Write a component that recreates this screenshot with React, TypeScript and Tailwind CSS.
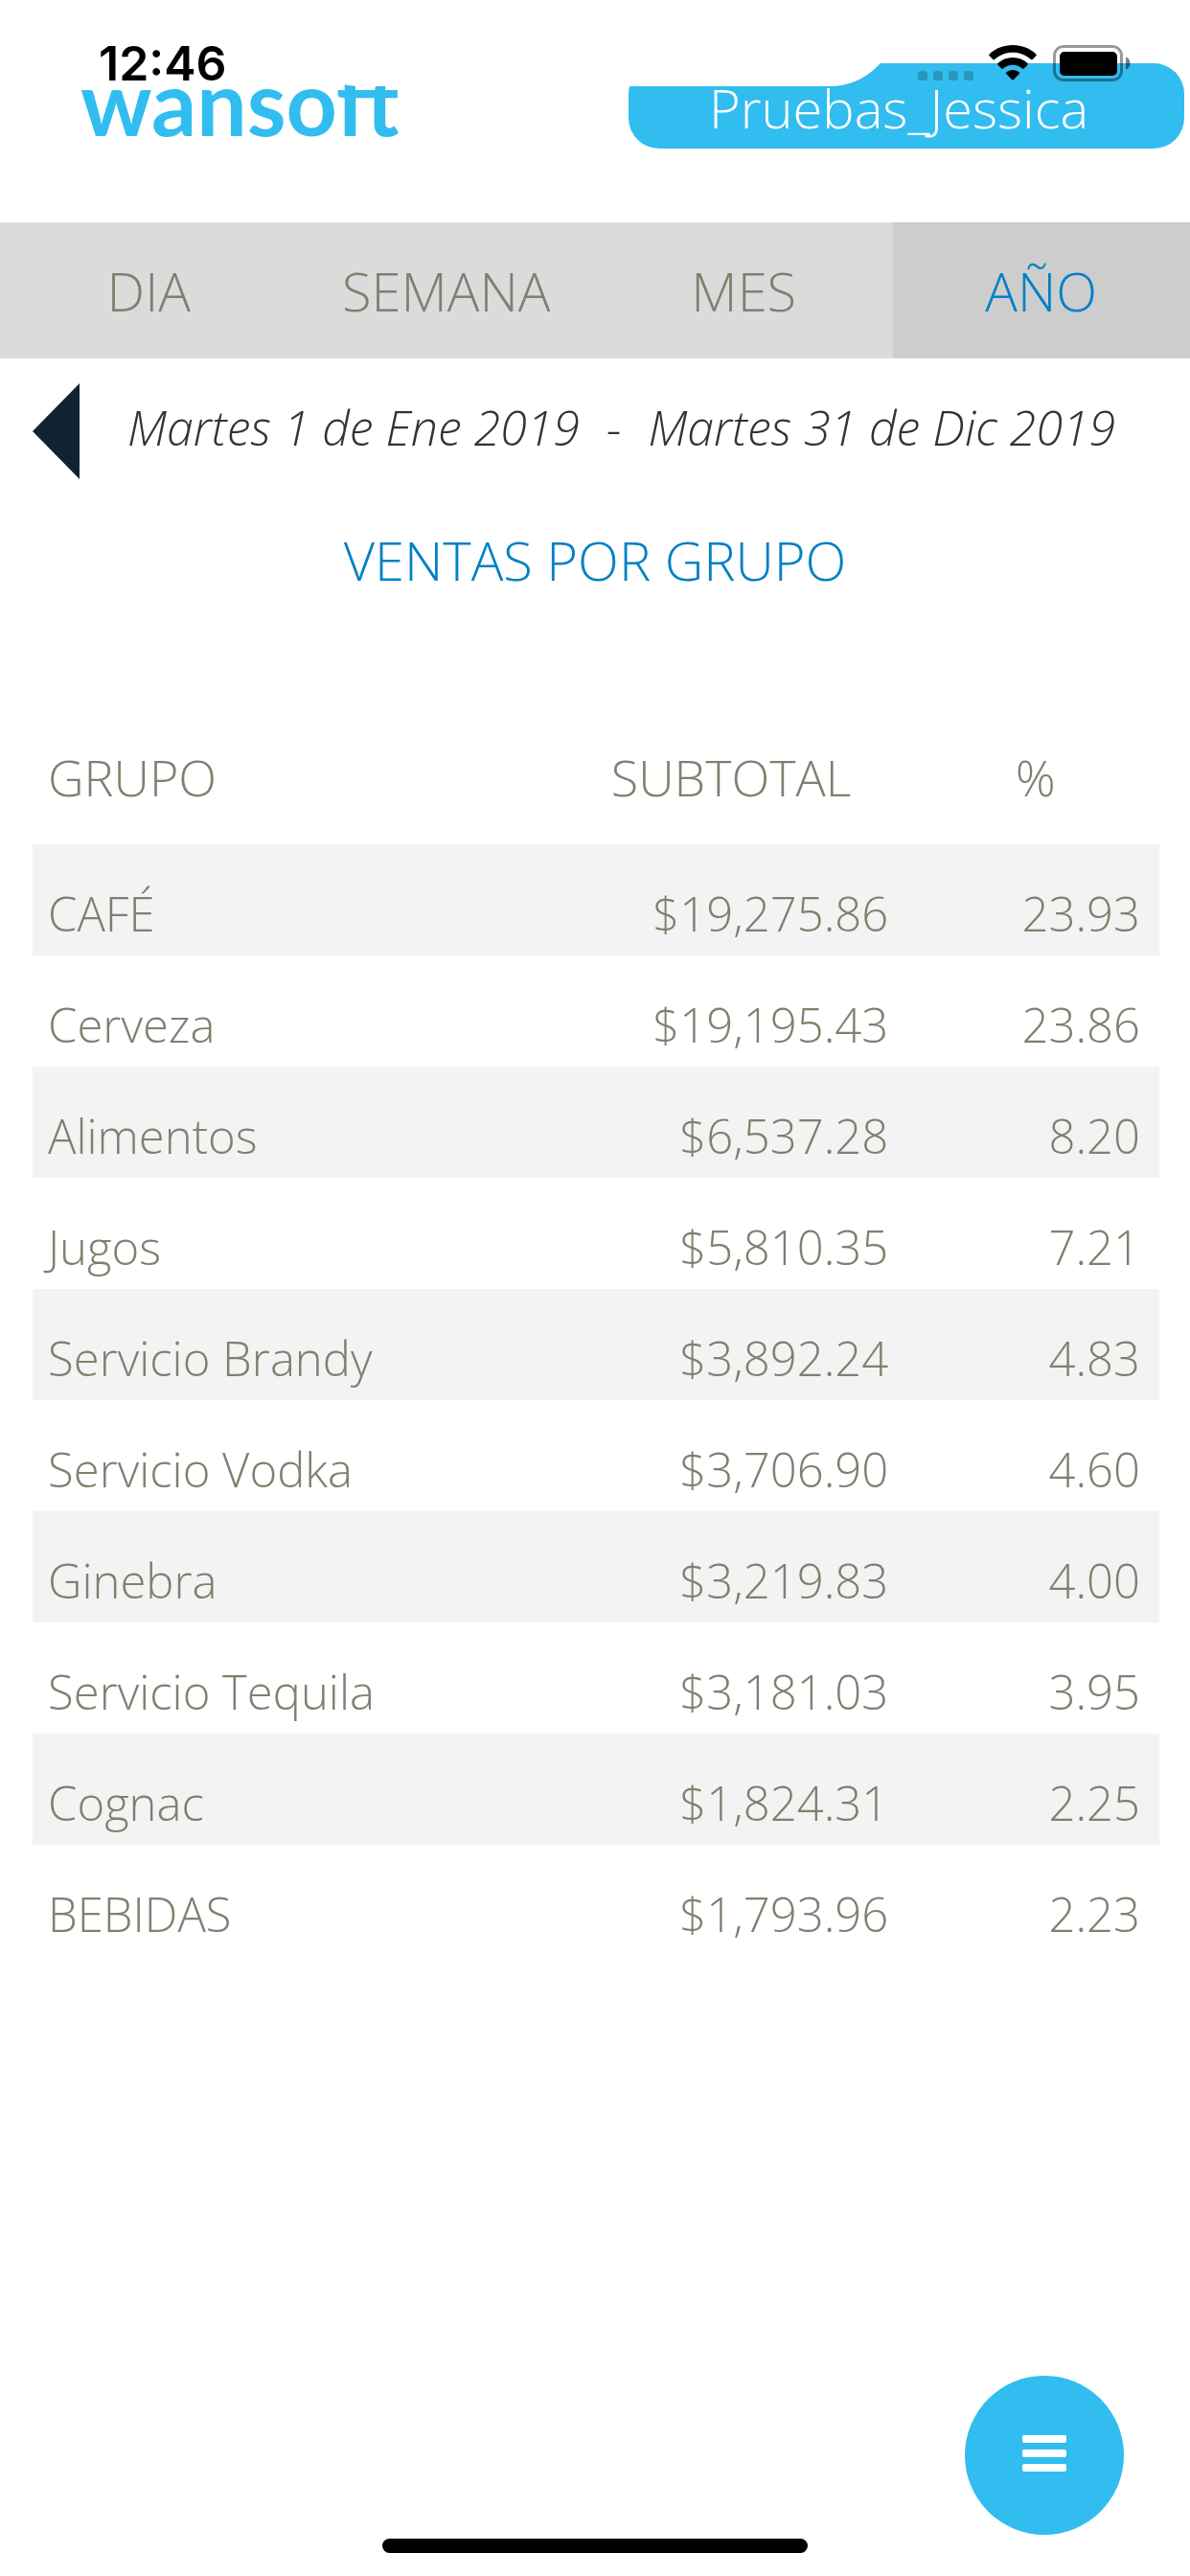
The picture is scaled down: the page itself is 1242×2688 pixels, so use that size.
import React, { useState } from 'react';
import { clsx } from 'clsx';

interface GroupSale {
  group: string;
  subtotal: string;
  percent: string;
}

const TABS = ['DIA', 'SEMANA', 'MES', 'AÑO'];

const SALES: GroupSale[] = [
  { group: 'CAFÉ', subtotal: '$19,275.86', percent: '23.93' },
  { group: 'Cerveza', subtotal: '$19,195.43', percent: '23.86' },
  { group: 'Alimentos', subtotal: '$6,537.28', percent: '8.20' },
  { group: 'Jugos', subtotal: '$5,810.35', percent: '7.21' },
  { group: 'Servicio Brandy', subtotal: '$3,892.24', percent: '4.83' },
  { group: 'Servicio Vodka', subtotal: '$3,706.90', percent: '4.60' },
  { group: 'Ginebra', subtotal: '$3,219.83', percent: '4.00' },
  { group: 'Servicio Tequila', subtotal: '$3,181.03', percent: '3.95' },
  { group: 'Cognac', subtotal: '$1,824.31', percent: '2.25' },
  { group: 'BEBIDAS', subtotal: '$1,793.96', percent: '2.23' },
];

function WifiIcon() {
  return (
    <svg viewBox="0 0 50 37" className="h-[37px] w-[50px]" aria-hidden="true">
      <path d="M25 0C15.600 0 7 3.500 0.600 9.500Q-0.200 10.300 0.600 11.200L4.300 15.100Q5.100 15.900 6 15.100C11.100 10.400 17.800 7.800 25 7.800S38.900 10.400 44 15.100Q44.900 15.900 45.700 15.100L49.400 11.200Q50.200 10.300 49.400 9.500C43 3.500 34.400 0 25 0Z" />
      <path d="M25 13C19 13 13.600 15.300 9.500 19Q8.700 19.800 9.500 20.700L13.300 24.500Q14.100 25.300 15 24.600C17.700 22.200 21.200 20.800 25 20.800S32.300 22.200 35 24.600Q35.900 25.300 36.700 24.500L40.500 20.700Q41.300 19.800 40.500 19C36.400 15.300 31 13 25 13Z" />
      <path d="M25 26C22.400 26 20 26.900 18.200 28.400Q17.400 29.200 18.200 30L24.200 36.300Q25 37.100 25.800 36.300L31.800 30Q32.600 29.200 31.800 28.400C30 26.900 27.600 26 25 26Z" />
    </svg>
  );
}

function BatteryIcon() {
  return (
    <svg viewBox="0 0 82 38" className="h-[38px] w-[82px]" aria-hidden="true">
      <rect x="1.500" y="1.500" width="70" height="35" rx="9.500" fill="none" stroke="black" strokeWidth="3" opacity="0.4" />
      <rect x="7" y="7" width="60" height="25" rx="5" />
      <path d="M76 12.500C79 13.500 80.500 16 80.500 19S79 24.500 76 25.500Z" opacity="0.5" />
    </svg>
  );
}

function StatusBar() {
  return (
    <div className="pointer-events-none absolute inset-x-0 top-0 z-10 h-[90px]">
      {/* device notch */}
      <div className="absolute inset-y-0 left-1/2 w-[630px] -translate-x-1/2 rounded-b-[70px] bg-white" />
      <div className="relative flex items-start justify-between pt-[46px] pr-[61px] pl-[103px]">
        <time className="-mt-1 font-['Inter',sans-serif] text-[50px] leading-[48px] font-semibold text-black">12:46</time>
        <div className="flex items-start pt-px">
          <div className="mt-[27px] mr-4 flex gap-[6px]">
            {[0, 1, 2, 3].map((dot) => (
              <span key={dot} className="size-[10px] rounded-[3px] bg-black/20" />
            ))}
          </div>
          <WifiIcon />
          <span className="w-[17px]" />
          <BatteryIcon />
        </div>
      </div>
    </div>
  );
}

function Header() {
  return (
    <header className="flex h-[232px] items-start justify-between pt-[66px] pr-[6px] pl-[84px]">
      <a href="#" className="-mt-5 font-['Lato',sans-serif] text-[93px] leading-[120px] font-bold text-[#31bdef]">
        wansoft
      </a>
      <button
        type="button"
        className="flex h-[89px] w-[580px] items-end justify-center rounded-[32px] bg-[#31bdef] pr-4 text-[56px] leading-[86px] font-[350] text-white"
      >
        Pruebas_Jessica
      </button>
    </header>
  );
}

function PeriodTabs() {
  const [active, setActive] = useState('AÑO');

  return (
    <nav className="grid h-[142px] grid-cols-4 bg-[#dbdbdb]">
      {TABS.map((tab) => (
        <button
          key={tab}
          type="button"
          aria-pressed={tab === active}
          onClick={() => setActive(tab)}
          className={clsx(
            'text-[56px] font-[350]',
            tab === active ? 'bg-[#cdcdcd] text-[#0080c5]' : 'text-[#7f806f]',
          )}
        >
          {tab}
        </button>
      ))}
    </nav>
  );
}

function DateRange() {
  return (
    <div className="flex items-start pt-[26px] pr-7 pl-[34px]">
      <button type="button" aria-label="Anterior">
        <svg viewBox="0 0 49 100" className="h-[100px] w-[49px]" aria-hidden="true">
          <path d="M49 0V100L0 50Z" fill="#112233" />
        </svg>
      </button>
      <p className="flex grow justify-center gap-7 pt-[10px] text-[50px] leading-[72px] font-[350] text-[#333333] italic">
        <span>Martes 1 de Ene 2019</span>
        <span>-</span>
        <span>Martes 31 de Dic 2019</span>
      </p>
    </div>
  );
}

function SalesTable({ rows }: { rows: GroupSale[] }) {
  return (
    <table className="w-full table-fixed text-[#7f806f]">
      <thead className="text-[52px] leading-[72px]">
        <tr>
          <th className="w-[46%] pb-[34px] pl-4 text-left font-[350]">GRUPO</th>
          <th className="w-[32%] pb-[34px] text-center font-[350]">SUBTOTAL</th>
          <th className="w-[22%] pb-[34px] text-center font-[350]">%</th>
        </tr>
      </thead>
      <tbody className="text-[49px] leading-[72px] font-light">
        {rows.map((row) => (
          <tr key={row.group} className="h-[116px] align-baseline odd:bg-[#f3f3f3]">
            <td className="pt-9 pl-4">{row.group}</td>
            <td className="pt-9 pr-6 text-right">{row.subtotal}</td>
            <td className="pt-9 pr-5 text-right">{row.percent}</td>
          </tr>
        ))}
      </tbody>
    </table>
  );
}

export default function App() {
  return (
    <div className="relative min-h-screen bg-white font-['Open_Sans','Noto_Sans',sans-serif]">
      <StatusBar />
      <Header />
      <PeriodTabs />
      <main>
        <DateRange />
        <h1 className="mt-12 text-center text-[56px] leading-[72px] font-[350] text-[#0080c5]">
          VENTAS POR GRUPO
        </h1>
        <section className="mt-[155px] pr-8 pl-[34px]">
          <SalesTable rows={SALES} />
        </section>
      </main>
      <button
        type="button"
        aria-label="Menú"
        className="fixed right-[69px] bottom-[43px] flex size-[166px] items-center justify-center rounded-full bg-[#31bdef]"
      >
        <svg viewBox="0 0 46 46" className="h-[46px] w-[46px]" fill="white" aria-hidden="true">
          <rect x="0" y="2" width="46" height="8" rx="2" />
          <rect x="0" y="17" width="46" height="8" rx="2" />
          <rect x="0" y="32" width="46" height="8" rx="2" />
        </svg>
      </button>
      <div className="fixed bottom-6 left-1/2 h-[15px] w-[444px] -translate-x-1/2 rounded-full bg-black" />
    </div>
  );
}
